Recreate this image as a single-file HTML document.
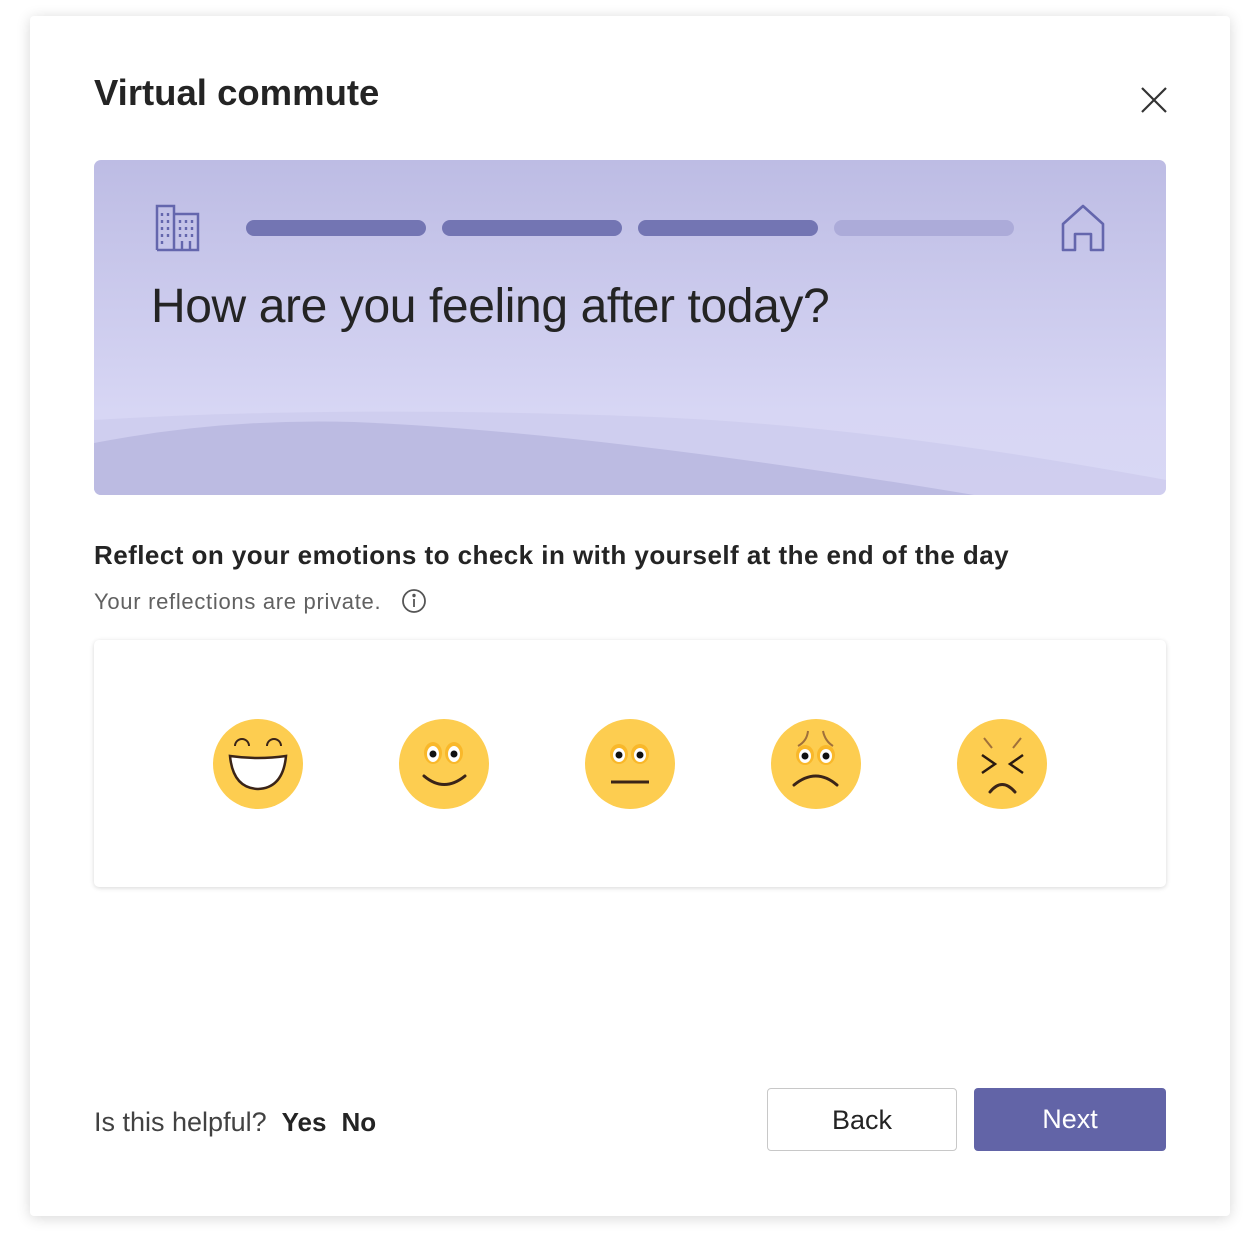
<!DOCTYPE html>
<html><head><meta charset="utf-8"><style>
body{margin:0;width:1258px;height:1258px;background:#fff;font-family:"Liberation Sans",sans-serif;position:relative;overflow:hidden}
.card{position:absolute;left:30px;top:16px;width:1200px;height:1200px;background:#fff;border-radius:4px;box-shadow:0 2px 14px rgba(0,0,0,.16)}
.a{position:absolute;white-space:nowrap}
.banner{left:94px;top:160px;width:1072px;height:335px;border-radius:7px;overflow:hidden;background:linear-gradient(#bdbce4,#d7d6f4 75%,#d9d8f5)}
.bar{position:absolute;top:220px;height:16px;width:180px;border-radius:8px;background:#7375b3}
.emo{position:absolute;top:719px;width:90px;height:90px}
.btn{position:absolute;top:1088px;height:63px;border-radius:4px;font-size:27px;text-align:center;line-height:63px;box-sizing:border-box}
</style></head><body>
<div class="card"></div>
<div class="a" style="left:94px;top:72px;font-size:36.5px;font-weight:bold;color:#242424">Virtual commute</div>
<svg class="a" style="left:1140px;top:86px" width="28" height="28"><path d="M2 2L26 26M26 2L2 26" stroke="#333" stroke-width="2.2"/></svg>
<div class="a banner">
<svg width="1072" height="335" style="position:absolute;left:0;top:0"><path d="M0 260 Q250 245 560 257 Q780 266 1072 320 L1072 335 L0 335Z" fill="#cccbed" opacity=".7"/><path d="M0 283 Q130 258 260 262 Q500 272 880 335 L0 335Z" fill="#bcbbe2"/></svg>
</div>
<svg class="a" style="left:155px;top:204px" width="46" height="48" fill="none" stroke="#6466ad" stroke-width="2.5"><path d="M2 46V2h17v44M19 10h24v36H19M2 46h41"/><path d="M7 9v3M13 9v3M7 16v3M13 16v3M7 23v3M13 23v3M7 30v3M13 30v3M7 37v3M25 16v3M31 16v3M37 16v3M25 23v3M31 23v3M37 23v3M25 30v3M31 30v3M37 30v3M27 37v9M35 37v9" stroke-width="2.4"/></svg>
<div class="bar" style="left:246px"></div><div class="bar" style="left:442px"></div><div class="bar" style="left:638px"></div><div class="bar" style="left:834px;background:#acabd9"></div>
<svg class="a" style="left:1060px;top:204px" width="46" height="48" fill="none" stroke="#6466ad" stroke-width="2.6"><path d="M3 46V20L23 2L43 20V46H31V30H15V46Z" stroke-linejoin="round"/></svg>
<div class="a" style="left:151px;top:279px;font-size:48px;letter-spacing:-0.4px;color:#242424">How are you feeling after today?</div>
<div class="a" style="left:94px;top:540px;font-size:26px;font-weight:bold;color:#242424;letter-spacing:0.45px">Reflect on your emotions to check in with yourself at the end of the day</div>
<div class="a" style="left:94px;top:589px;font-size:22px;color:#616161;letter-spacing:0.7px">Your reflections are private.</div>
<svg class="a" style="left:401px;top:588px" width="26" height="26" fill="none" stroke="#555" stroke-width="1.8"><circle cx="13" cy="13" r="11"/><path d="M13 11v8"/><circle cx="13" cy="7.5" r=".8" fill="#555"/></svg>
<div class="a" style="left:94px;top:640px;width:1072px;height:247px;background:#fff;border-radius:5px;box-shadow:0 1px 5px rgba(0,0,0,.16)"></div>
<svg class="emo" style="left:213px" viewBox="0 0 90 90"><circle cx="45" cy="45" r="45" fill="#fdcd50"/><path d="M17 37 Q45 41 73 37 Q70 69 45 70 Q20 69 17 37Z" fill="#fff" stroke="#3a2418" stroke-width="2.5"/><path d="M22 27a7 7 0 0 1 14 0M54 27a7 7 0 0 1 14 0" fill="none" stroke="#3a2418" stroke-width="2"/></svg>
<svg class="emo" style="left:399px" viewBox="0 0 90 90"><circle cx="45" cy="45" r="45" fill="#fdcd50"/><ellipse cx="34" cy="34" rx="9" ry="11" fill="#f9b82a"/><ellipse cx="55" cy="34" rx="9" ry="11" fill="#f9b82a"/><ellipse cx="34" cy="35" rx="6" ry="8" fill="#fff"/><ellipse cx="55" cy="35" rx="6" ry="8" fill="#fff"/><circle cx="34" cy="35" r="3.5" fill="#111"/><circle cx="55" cy="35" r="3.5" fill="#111"/><path d="M25 57 Q45 74 66 57" fill="none" stroke="#3a2418" stroke-width="3" stroke-linecap="round"/></svg>
<svg class="emo" style="left:585px" viewBox="0 0 90 90"><circle cx="45" cy="45" r="45" fill="#fdcd50"/><ellipse cx="34" cy="35" rx="9" ry="10" fill="#f9b82a"/><ellipse cx="55" cy="35" rx="9" ry="10" fill="#f9b82a"/><ellipse cx="34" cy="36" rx="6" ry="7" fill="#fff"/><ellipse cx="55" cy="36" rx="6" ry="7" fill="#fff"/><circle cx="34" cy="36" r="3.5" fill="#111"/><circle cx="55" cy="36" r="3.5" fill="#111"/><path d="M26 63H64" stroke="#3a2418" stroke-width="3"/></svg>
<svg class="emo" style="left:771px" viewBox="0 0 90 90"><circle cx="45" cy="45" r="45" fill="#fdcd50"/><path d="M37 12Q36 22 27 27M52 12Q54 22 62 27" fill="none" stroke="#a0703a" stroke-width="2"/><ellipse cx="34" cy="36" rx="9" ry="10" fill="#f9b82a"/><ellipse cx="55" cy="36" rx="9" ry="10" fill="#f9b82a"/><ellipse cx="34" cy="37" rx="6" ry="7" fill="#fff"/><ellipse cx="55" cy="37" rx="6" ry="7" fill="#fff"/><circle cx="34" cy="37" r="3.5" fill="#111"/><circle cx="55" cy="37" r="3.5" fill="#111"/><path d="M23 66Q45 48 66 66" fill="none" stroke="#3a2418" stroke-width="3" stroke-linecap="round"/></svg>
<svg class="emo" style="left:957px" viewBox="0 0 90 90"><circle cx="45" cy="45" r="45" fill="#fdcd50"/><path d="M27 19L35 29M64 19L56 29" stroke="#a0703a" stroke-width="2"/><path d="M25 36L38 45L25 54M66 36L53 45L66 54" fill="none" stroke="#2a1a10" stroke-width="2.5"/><path d="M33 73Q45 58 58 73" fill="none" stroke="#3a2418" stroke-width="3" stroke-linecap="round"/></svg>
<div class="a" style="left:94px;top:1107px;font-size:27px;color:#424242">Is this helpful?&nbsp; <b style="color:#242424;font-weight:600;font-size:26px">Yes</b>&nbsp; <b style="color:#242424;font-weight:600;font-size:26px">No</b></div>
<div class="btn" style="left:767px;width:190px;border:1.5px solid #c8c8c8;color:#242424;background:#fff">Back</div>
<div class="btn" style="left:974px;width:192px;background:#6264a7;color:#fff">Next</div>
</body></html>
